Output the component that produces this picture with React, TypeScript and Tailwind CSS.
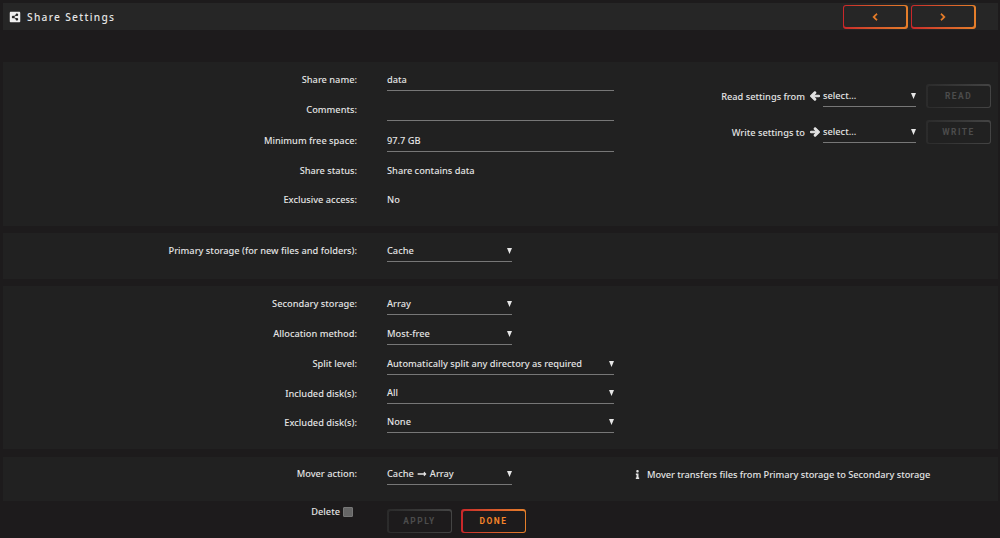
import type { ReactNode } from "react";
import { FaArrowLeft, FaArrowRight, FaChevronLeft, FaChevronRight, FaInfo, FaShareAltSquare, FaLongArrowAltRight } from "react-icons/fa";

function Caret() {
	return (
		<svg viewBox="0 0 6 7" className="h-[6px] w-[5px] shrink-0 fill-[#e6e6e6]">
			<path d="M0 0h6L3 7z" />
		</svg>
	);
}

function Row({ label, className, children }: { label: string; className: string; children?: ReactNode }) {
	return (
		<div className={`flex ${className}`}>
			<div className="flex w-[354px] shrink-0 items-center justify-end">{label}</div>
			<div className="ml-[30px] flex flex-1 items-end pb-1">{children}</div>
		</div>
	);
}

function Field({ className, children }: { className: string; children?: ReactNode }) {
	return <div className={`flex h-[22px] items-center border-b border-[#777] pt-px ${className}`}>{children}</div>;
}

function Select({ className, children }: { className: string; children: ReactNode }) {
	return (
		<Field className={`justify-between ${className}`}>
			<span className="flex items-center">{children}</span>
			<Caret />
		</Field>
	);
}

function Button({ disabled, inner, children }: { disabled?: boolean; inner: string; children: ReactNode }) {
	return (
		<button
			className={`h-6 w-[65px] shrink-0 rounded-[3px] bg-gradient-to-r p-[1.5px] ${disabled ? "from-[#2b2b2b] to-[#444] text-[#4c4c4c]" : "from-[#c9262a] to-[#e57f2a] text-[#f5842a]"}`}
		>
			<span className={`flex h-full w-full items-center justify-center rounded-[2px] font-[Roboto,sans-serif] text-[8.4px] font-bold tracking-[1.5px] ${inner}`}>{children}</span>
		</button>
	);
}

export default function App() {
	return (
		<div className="h-[538px] overflow-hidden bg-[#1d1b1c] pt-[3px] pr-[2px] pl-[3px] font-['Noto_Sans',sans-serif] text-[9.25px] leading-[12px] font-medium text-[#e4e4e4]">
			{/* title bar */}
			<header className="flex h-[27px] items-center bg-[#262626] pl-[6px]">
				<FaShareAltSquare className="size-[12px] text-[#f0f0f0]" />
				<h1 className="ml-[6px] flex-1 text-[10.2px] tracking-[1.3px]">Share Settings</h1>
				<div className="mr-[22.5px] flex gap-[3px]">
					<Button inner="bg-[#262626]"><FaChevronLeft className="size-[8px] stroke-current stroke-[40]" /></Button>
					<Button inner="bg-[#262626]"><FaChevronRight className="size-[8px] stroke-current stroke-[40]" /></Button>
				</div>
			</header>

			{/* share */}
			<section className="mt-8 flex h-[164px] bg-[#212121] pt-[2px]">
				<div className="w-[611px]">
					<Row label="Share name:" className="h-[31px]"><Field className="w-full">data</Field></Row>
					<Row label="Comments:" className="h-[30px]"><Field className="w-full" /></Row>
					<Row label="Minimum free space:" className="h-[31px]"><Field className="w-full">97.7 GB</Field></Row>
					<Row label="Share status:" className="h-[30px]"><span className="pb-[5px]">Share contains data</span></Row>
					<Row label="Exclusive access:" className="h-[28px]"><span className="pb-[4px]">No</span></Row>
				</div>
				<div className="mr-[7px] flex-1 pt-[20px]">
					<div className="flex h-[36px] justify-end">
						<span className="mt-[7px]">Read settings from</span>
						<FaArrowLeft className="mr-[3px] ml-[5px] mt-[7px] size-[10px] stroke-current stroke-[60]" />
						<Select className="mt-px w-[93px]">select...</Select>
						<div className="ml-[10px]"><Button disabled inner="bg-[#212121]">READ</Button></div>
					</div>
					<div className="flex h-[36px] justify-end">
						<span className="mt-[7px]">Write settings to</span>
						<FaArrowRight className="mr-[3px] ml-[5px] mt-[7px] size-[10px] stroke-current stroke-[60]" />
						<Select className="mt-px w-[93px]">select...</Select>
						<div className="ml-[10px]"><Button disabled inner="bg-[#212121]">WRITE</Button></div>
					</div>
				</div>
			</section>

			<section className="mt-[7px] h-[46px] bg-[#212121] pt-[3px]">
				<Row label="Primary storage (for new files and folders):" className="h-[30px]"><Select className="w-[125px]">Cache</Select></Row>
			</section>

			<section className="mt-[7px] h-[163px] bg-[#212121] pt-[3px]">
				<Row label="Secondary storage:" className="h-[30px]"><Select className="w-[125px]">Array</Select></Row>
				<Row label="Allocation method:" className="h-[30px]"><Select className="w-[125px]">Most-free</Select></Row>
				<Row label="Split level:" className="h-[30px]"><Select className="w-[227px]">Automatically split any directory as required</Select></Row>
				<Row label="Included disk(s):" className="h-[29px]"><Select className="w-[227px]">All</Select></Row>
				<Row label="Excluded disk(s):" className="h-[29px]"><Select className="w-[227px]">None</Select></Row>
			</section>

			<section className="mt-2 h-[44px] bg-[#212121] pt-[2px]">
				<Row label="Mover action:" className="h-[30px]">
					<Select className="w-[125px]">Cache<FaLongArrowAltRight className="mx-[3px] size-[10px]" />Array</Select>
					<FaInfo className="mb-[6px] ml-[121px] size-[9px]" />
					<span className="mb-[4px] ml-[5px] tracking-[-0.02px]">Mover transfers files from Primary storage to Secondary storage</span>
				</Row>
			</section>

			<footer className="flex">
				<label className="flex h-[22px] w-[350px] items-center justify-end gap-[3px]">
					Delete
					<span className="size-[10px] rounded-[1px] border border-[#777] bg-[#666]"></span>
				</label>
				<div className="mt-2 ml-[34px] flex gap-[9px]">
					<Button disabled inner="bg-[#1d1b1c]">APPLY</Button>
					<Button inner="bg-[#1d1b1c]">DONE</Button>
				</div>
			</footer>
		</div>
	);
}
